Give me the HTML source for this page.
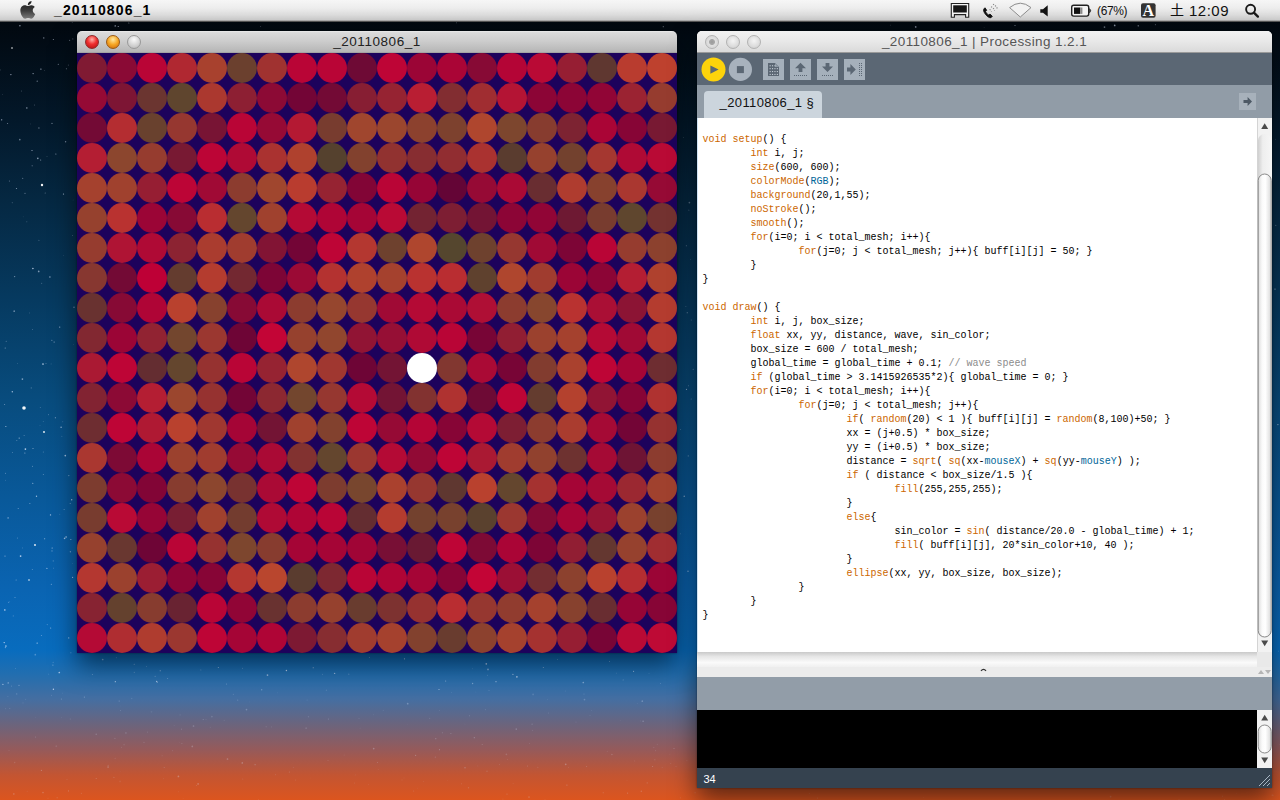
<!DOCTYPE html>
<html lang="ja">
<head>
<meta charset="utf-8">
<title>_20110806_1</title>
<style>
*{box-sizing:border-box;margin:0;padding:0}
html,body{width:1280px;height:800px;overflow:hidden}
body{position:relative;font-family:"Liberation Sans","Noto Sans CJK JP",sans-serif;color:#000;
background:linear-gradient(180deg,#010509 0px,#020b14 40px,#03182a 120px,#052842 200px,#063a60 300px,#084c7e 400px,#09599a 500px,#0a64b2 590px,#086cbe 650px,#236eaf 675px,#466ea0 700px,#6c647c 725px,#965a5a 750px,#c35532 775px,#dc551e 800px);}
#stars{position:absolute;left:0;top:0;width:1280px;height:800px}
/* menubar */
#menubar{position:absolute;left:0;top:0;width:1280px;height:22px;background:linear-gradient(180deg,#f6f6f6 0,#ededed 8px,#dcdcdc 15px,#cbcbcb 20px,#8a8a8a 21px,#222 22px);}
#menubar .apptitle{position:absolute;left:54px;top:0px;font-weight:bold;font-size:14px;line-height:20px;letter-spacing:1.15px}
#menubar .txt{position:absolute;top:1px;font-size:14px;line-height:20px;color:#111;white-space:nowrap}
#menubar svg{position:absolute}
/* sketch window */
#sketch{position:absolute;left:77px;top:31px;width:600px;height:622px;box-shadow:0 12px 26px 0px rgba(0,0,0,.55),0 0 2px rgba(0,0,0,.5);border-radius:5px 5px 0 0}
.tbar{position:absolute;left:0;top:0;width:100%;height:22px;border-radius:5px 5px 0 0;background:linear-gradient(180deg,#ebebeb 0,#dadada 8%,#cecece 45%,#b6b6b6 100%);border-bottom:1px solid #a4a4a4;text-align:center;font-size:13.5px;letter-spacing:.55px;line-height:21px;color:#222}
.tl{position:absolute;top:4px;width:14px;height:14px;border-radius:50%}
#canvas{position:absolute;left:0;top:22px;width:600px;height:600px;background:#1d025c;display:block}
/* processing window */
#pde{position:absolute;left:697px;top:31px;width:575px;height:757px;box-shadow:0 12px 26px 0px rgba(0,0,0,.55),0 0 2px rgba(0,0,0,.5);border-radius:5px 5px 0 0;background:#fff}
#pde .tbar{color:#555;font-size:13.5px;letter-spacing:.4px;background:linear-gradient(180deg,#f2f2f2 0,#e8e8e8 50%,#dadada 100%);border-bottom:1px solid #9a9a9a}
#toolbar{position:absolute;left:0;top:22px;width:575px;height:32px;background:#5b6774}
#tabs{position:absolute;left:0;top:54px;width:575px;height:33px;background:#919ca7}
#tab{position:absolute;left:7px;top:6px;width:118px;height:27px;background:#ccd5dd;border-radius:4px 4px 0 0;font-size:13px;line-height:24px;padding-left:15.500px;letter-spacing:.4px;color:#111}
#editor{overflow:hidden;position:absolute;left:0;top:87px;width:560px;height:534px;background:#fff;border-left:1px solid #cfe3f5}
#code{position:absolute;left:4.500px;top:15px;font-family:"Liberation Mono",monospace;font-size:10px;line-height:14px;color:#000}
.ln{white-space:pre;height:14px}
.k{color:#cc6600}.f{color:#cc6600}.c{color:#006699}.m{color:#8c8c8c}
#vscroll{position:absolute;left:560px;top:87px;width:15px;height:534px;background:linear-gradient(90deg,#d9d9d9 0,#f4f4f4 30%,#ffffff 60%,#e9e9e9 100%)}
#hscroll{position:absolute;left:0;top:621px;width:575px;height:15px;background:linear-gradient(180deg,#c9c9c9 0,#e6e6e6 30%,#fafafa 70%,#f0f0f0 100%)}
#divider{position:absolute;left:0;top:636px;width:575px;height:10px;background:#ececec}
#msg{position:absolute;left:0;top:646px;width:575px;height:33px;background:#929da8}
#console{position:absolute;left:0;top:679px;width:560px;height:58px;background:#000}
#cscroll{position:absolute;left:560px;top:679px;width:15px;height:58px;background:linear-gradient(90deg,#d9d9d9 0,#f4f4f4 30%,#ffffff 60%,#e9e9e9 100%)}
#status{position:absolute;left:0;top:737px;width:575px;height:20px;background:#35424f;color:#fff;font-size:11px;line-height:22px;padding-left:6.500px}
</style>
</head>
<body>
<svg id="stars" viewBox="0 0 1280 800">
<circle cx="685.9" cy="306.5" r="0.35" fill="#dfeaff" opacity="0.80"/>
<circle cx="63.5" cy="194.0" r="0.6" fill="#dfeaff" opacity="0.77"/>
<circle cx="368.6" cy="784.6" r="0.35" fill="#dfeaff" opacity="0.20"/>
<circle cx="15.4" cy="668.6" r="0.45" fill="#dfeaff" opacity="0.41"/>
<circle cx="5.2" cy="347.9" r="0.5" fill="#dfeaff" opacity="0.62"/>
<circle cx="584.5" cy="699.6" r="0.85" fill="#dfeaff" opacity="0.23"/>
<circle cx="686.9" cy="760.3" r="0.6" fill="#dfeaff" opacity="0.09"/>
<circle cx="157.2" cy="682.5" r="0.5" fill="#dfeaff" opacity="0.54"/>
<circle cx="447.4" cy="780.2" r="0.35" fill="#dfeaff" opacity="0.13"/>
<circle cx="193.5" cy="726.0" r="0.85" fill="#dfeaff" opacity="0.23"/>
<circle cx="607.2" cy="751.3" r="0.45" fill="#dfeaff" opacity="0.20"/>
<circle cx="674.0" cy="748.4" r="0.5" fill="#dfeaff" opacity="0.29"/>
<circle cx="249.4" cy="701.9" r="0.35" fill="#dfeaff" opacity="0.14"/>
<circle cx="680.7" cy="429.3" r="0.35" fill="#dfeaff" opacity="0.77"/>
<circle cx="35.7" cy="717.5" r="0.35" fill="#dfeaff" opacity="0.18"/>
<circle cx="611.9" cy="754.5" r="0.7" fill="#dfeaff" opacity="0.20"/>
<circle cx="120.5" cy="710.5" r="0.45" fill="#dfeaff" opacity="0.30"/>
<circle cx="24.9" cy="453.1" r="0.5" fill="#dfeaff" opacity="0.67"/>
<circle cx="378.2" cy="769.5" r="0.35" fill="#dfeaff" opacity="0.29"/>
<circle cx="50.7" cy="628.1" r="0.5" fill="#dfeaff" opacity="0.70"/>
<circle cx="21.5" cy="90.9" r="0.5" fill="#dfeaff" opacity="0.30"/>
<circle cx="23.2" cy="216.8" r="0.35" fill="#dfeaff" opacity="0.26"/>
<circle cx="647.2" cy="782.9" r="0.6" fill="#dfeaff" opacity="0.19"/>
<circle cx="633.6" cy="671.3" r="0.5" fill="#dfeaff" opacity="0.83"/>
<circle cx="178.8" cy="791.8" r="0.35" fill="#dfeaff" opacity="0.26"/>
<circle cx="18.2" cy="508.6" r="0.5" fill="#dfeaff" opacity="0.51"/>
<circle cx="70.9" cy="539.5" r="0.5" fill="#dfeaff" opacity="0.77"/>
<circle cx="456.4" cy="22.8" r="0.5" fill="#dfeaff" opacity="0.30"/>
<circle cx="116.3" cy="657.7" r="0.45" fill="#dfeaff" opacity="0.49"/>
<circle cx="53.3" cy="39.5" r="0.5" fill="#dfeaff" opacity="0.63"/>
<circle cx="108.1" cy="767.0" r="0.85" fill="#dfeaff" opacity="0.25"/>
<circle cx="417.5" cy="788.1" r="0.45" fill="#dfeaff" opacity="0.15"/>
<circle cx="20.6" cy="556.1" r="0.85" fill="#dfeaff" opacity="0.79"/>
<circle cx="134.3" cy="672.3" r="0.6" fill="#dfeaff" opacity="0.28"/>
<circle cx="24.1" cy="435.5" r="0.45" fill="#dfeaff" opacity="0.54"/>
<circle cx="4.2" cy="642.6" r="0.7" fill="#dfeaff" opacity="0.81"/>
<circle cx="59.8" cy="514.3" r="0.45" fill="#dfeaff" opacity="0.30"/>
<circle cx="22.4" cy="379.1" r="0.85" fill="#dfeaff" opacity="0.55"/>
<circle cx="1273.1" cy="795.3" r="0.5" fill="#dfeaff" opacity="0.13"/>
<circle cx="670.8" cy="763.2" r="0.45" fill="#dfeaff" opacity="0.21"/>
<circle cx="637.3" cy="703.6" r="0.5" fill="#dfeaff" opacity="0.09"/>
<circle cx="4.6" cy="404.5" r="0.5" fill="#dfeaff" opacity="0.49"/>
<circle cx="15.0" cy="597.6" r="0.5" fill="#dfeaff" opacity="0.47"/>
<circle cx="502.9" cy="799.1" r="0.6" fill="#dfeaff" opacity="0.10"/>
<circle cx="66.1" cy="537.0" r="0.7" fill="#dfeaff" opacity="0.81"/>
<circle cx="477.9" cy="765.9" r="0.35" fill="#dfeaff" opacity="0.26"/>
<circle cx="266.1" cy="726.8" r="0.5" fill="#dfeaff" opacity="0.20"/>
<circle cx="25.7" cy="699.3" r="0.5" fill="#dfeaff" opacity="0.17"/>
<circle cx="355.2" cy="774.9" r="0.45" fill="#dfeaff" opacity="0.23"/>
<circle cx="1.7" cy="119.8" r="0.6" fill="#dfeaff" opacity="0.80"/>
<circle cx="377.5" cy="762.6" r="0.5" fill="#dfeaff" opacity="0.22"/>
<circle cx="69.6" cy="40.4" r="0.6" fill="#dfeaff" opacity="0.34"/>
<circle cx="66.4" cy="68.8" r="0.5" fill="#dfeaff" opacity="0.52"/>
<circle cx="693.2" cy="369.3" r="0.5" fill="#dfeaff" opacity="0.47"/>
<circle cx="44.6" cy="70.7" r="0.35" fill="#dfeaff" opacity="0.40"/>
<circle cx="4.8" cy="609.9" r="0.85" fill="#dfeaff" opacity="0.63"/>
<circle cx="43.3" cy="451.9" r="0.5" fill="#dfeaff" opacity="0.35"/>
<circle cx="590.0" cy="715.4" r="0.45" fill="#dfeaff" opacity="0.24"/>
<circle cx="155.1" cy="676.2" r="0.5" fill="#dfeaff" opacity="0.42"/>
<circle cx="360.1" cy="728.1" r="0.45" fill="#dfeaff" opacity="0.16"/>
<circle cx="507.0" cy="794.1" r="0.6" fill="#dfeaff" opacity="0.20"/>
<circle cx="5.7" cy="708.8" r="0.45" fill="#dfeaff" opacity="0.26"/>
<circle cx="242.7" cy="779.0" r="0.6" fill="#dfeaff" opacity="0.13"/>
<circle cx="8.1" cy="517.9" r="0.7" fill="#dfeaff" opacity="0.62"/>
<circle cx="14.6" cy="276.6" r="0.7" fill="#dfeaff" opacity="0.47"/>
<circle cx="40.3" cy="407.6" r="0.5" fill="#dfeaff" opacity="0.29"/>
<circle cx="533.1" cy="694.4" r="0.85" fill="#dfeaff" opacity="0.16"/>
<circle cx="260.7" cy="26.6" r="0.45" fill="#dfeaff" opacity="0.50"/>
<circle cx="162.1" cy="755.7" r="0.5" fill="#dfeaff" opacity="0.15"/>
<circle cx="246.5" cy="709.6" r="0.85" fill="#dfeaff" opacity="0.25"/>
<circle cx="48.8" cy="674.1" r="0.35" fill="#dfeaff" opacity="0.48"/>
<circle cx="583.3" cy="682.5" r="0.85" fill="#dfeaff" opacity="0.43"/>
<circle cx="29.9" cy="503.5" r="0.5" fill="#dfeaff" opacity="0.53"/>
<circle cx="52.0" cy="123.4" r="0.7" fill="#dfeaff" opacity="0.44"/>
<circle cx="33.1" cy="73.6" r="0.6" fill="#dfeaff" opacity="0.69"/>
<circle cx="203.2" cy="719.5" r="0.5" fill="#dfeaff" opacity="0.28"/>
<circle cx="58.3" cy="64.3" r="0.6" fill="#dfeaff" opacity="0.46"/>
<circle cx="172.5" cy="750.7" r="0.45" fill="#dfeaff" opacity="0.24"/>
<circle cx="0.5" cy="69.9" r="0.35" fill="#dfeaff" opacity="0.49"/>
<circle cx="915.7" cy="26.9" r="0.85" fill="#dfeaff" opacity="0.51"/>
<circle cx="1275.7" cy="225.4" r="0.7" fill="#dfeaff" opacity="0.27"/>
<circle cx="306.1" cy="728.1" r="0.7" fill="#dfeaff" opacity="0.28"/>
<circle cx="686.5" cy="389.3" r="0.6" fill="#dfeaff" opacity="0.67"/>
<circle cx="34.4" cy="105.0" r="0.45" fill="#dfeaff" opacity="0.46"/>
<circle cx="53.3" cy="560.9" r="0.7" fill="#dfeaff" opacity="0.28"/>
<circle cx="255.1" cy="764.7" r="0.6" fill="#dfeaff" opacity="0.27"/>
<circle cx="84.4" cy="697.1" r="0.7" fill="#dfeaff" opacity="0.29"/>
<circle cx="26.8" cy="221.7" r="0.5" fill="#dfeaff" opacity="0.28"/>
<circle cx="40.0" cy="425.5" r="0.35" fill="#dfeaff" opacity="0.46"/>
<circle cx="277.2" cy="692.8" r="0.35" fill="#dfeaff" opacity="0.21"/>
<circle cx="627.6" cy="793.1" r="0.6" fill="#dfeaff" opacity="0.25"/>
<circle cx="485.5" cy="709.7" r="0.45" fill="#dfeaff" opacity="0.29"/>
<circle cx="43.4" cy="474.5" r="0.6" fill="#dfeaff" opacity="0.34"/>
<circle cx="591.4" cy="710.6" r="0.45" fill="#dfeaff" opacity="0.19"/>
<circle cx="1222.4" cy="796.1" r="0.45" fill="#dfeaff" opacity="0.29"/>
<circle cx="627.0" cy="780.3" r="0.35" fill="#dfeaff" opacity="0.14"/>
<circle cx="445.7" cy="681.1" r="0.5" fill="#dfeaff" opacity="0.57"/>
<circle cx="72.5" cy="235.4" r="0.5" fill="#dfeaff" opacity="0.29"/>
<circle cx="96.2" cy="734.2" r="0.7" fill="#dfeaff" opacity="0.23"/>
<circle cx="289.3" cy="771.9" r="0.5" fill="#dfeaff" opacity="0.23"/>
<circle cx="529.0" cy="797.0" r="0.85" fill="#dfeaff" opacity="0.20"/>
<circle cx="160.2" cy="670.7" r="0.5" fill="#dfeaff" opacity="0.72"/>
<circle cx="415.6" cy="755.4" r="0.6" fill="#dfeaff" opacity="0.26"/>
<circle cx="14.7" cy="762.5" r="0.7" fill="#dfeaff" opacity="0.15"/>
<circle cx="684.2" cy="496.2" r="0.7" fill="#dfeaff" opacity="0.62"/>
<circle cx="1104.5" cy="27.1" r="0.85" fill="#dfeaff" opacity="0.44"/>
<circle cx="545.0" cy="800.0" r="0.7" fill="#dfeaff" opacity="0.10"/>
<circle cx="36.5" cy="496.3" r="0.7" fill="#dfeaff" opacity="0.69"/>
<circle cx="1278.7" cy="651.1" r="0.35" fill="#dfeaff" opacity="0.56"/>
<circle cx="620.4" cy="720.3" r="0.35" fill="#dfeaff" opacity="0.13"/>
<circle cx="163.3" cy="778.8" r="0.35" fill="#dfeaff" opacity="0.25"/>
<circle cx="51.3" cy="584.2" r="0.5" fill="#dfeaff" opacity="0.58"/>
<circle cx="63.6" cy="255.7" r="0.35" fill="#dfeaff" opacity="0.28"/>
<circle cx="50.5" cy="514.9" r="0.7" fill="#dfeaff" opacity="0.71"/>
<circle cx="47.3" cy="624.6" r="0.7" fill="#dfeaff" opacity="0.26"/>
<circle cx="43.8" cy="37.9" r="0.6" fill="#dfeaff" opacity="0.64"/>
<circle cx="19.9" cy="25.7" r="0.7" fill="#dfeaff" opacity="0.65"/>
<circle cx="40.9" cy="69.1" r="0.7" fill="#dfeaff" opacity="0.66"/>
<circle cx="19.8" cy="139.6" r="0.85" fill="#dfeaff" opacity="0.44"/>
<circle cx="548.6" cy="713.0" r="0.5" fill="#dfeaff" opacity="0.17"/>
<circle cx="180.1" cy="714.9" r="0.6" fill="#dfeaff" opacity="0.12"/>
<circle cx="691.2" cy="399.1" r="0.5" fill="#dfeaff" opacity="0.37"/>
<circle cx="57.1" cy="797.8" r="0.5" fill="#dfeaff" opacity="0.27"/>
<circle cx="38.9" cy="240.3" r="0.6" fill="#dfeaff" opacity="0.26"/>
<circle cx="43.0" cy="792.5" r="0.85" fill="#dfeaff" opacity="0.21"/>
<circle cx="167.6" cy="678.4" r="0.5" fill="#dfeaff" opacity="0.37"/>
<circle cx="65.3" cy="455.6" r="0.85" fill="#dfeaff" opacity="0.67"/>
<circle cx="623.1" cy="679.9" r="0.35" fill="#dfeaff" opacity="0.77"/>
<circle cx="114.9" cy="738.4" r="0.6" fill="#dfeaff" opacity="0.17"/>
<circle cx="1236.2" cy="793.6" r="0.45" fill="#dfeaff" opacity="0.12"/>
<circle cx="35.6" cy="737.1" r="0.5" fill="#dfeaff" opacity="0.25"/>
<circle cx="16.1" cy="580.0" r="0.45" fill="#dfeaff" opacity="0.73"/>
<circle cx="200.9" cy="669.9" r="0.35" fill="#dfeaff" opacity="0.81"/>
<circle cx="124.1" cy="744.6" r="0.85" fill="#dfeaff" opacity="0.09"/>
<circle cx="96.2" cy="778.5" r="0.5" fill="#dfeaff" opacity="0.26"/>
<circle cx="72.6" cy="577.3" r="0.6" fill="#dfeaff" opacity="0.78"/>
<circle cx="32.5" cy="466.2" r="0.5" fill="#dfeaff" opacity="0.45"/>
<circle cx="407.1" cy="724.7" r="0.35" fill="#dfeaff" opacity="0.12"/>
<circle cx="51.9" cy="340.2" r="0.5" fill="#dfeaff" opacity="0.59"/>
<circle cx="70.9" cy="652.7" r="0.5" fill="#dfeaff" opacity="0.42"/>
<circle cx="46.9" cy="568.4" r="0.6" fill="#dfeaff" opacity="0.61"/>
<circle cx="5.9" cy="426.4" r="0.5" fill="#dfeaff" opacity="0.83"/>
<circle cx="313.2" cy="667.8" r="0.5" fill="#dfeaff" opacity="0.72"/>
<circle cx="334.6" cy="673.4" r="0.7" fill="#dfeaff" opacity="0.60"/>
<circle cx="131.7" cy="698.5" r="0.7" fill="#dfeaff" opacity="0.13"/>
<circle cx="507.7" cy="759.7" r="0.35" fill="#dfeaff" opacity="0.28"/>
<circle cx="506.4" cy="754.3" r="0.85" fill="#dfeaff" opacity="0.16"/>
<circle cx="512.9" cy="674.4" r="0.7" fill="#dfeaff" opacity="0.51"/>
<circle cx="662.2" cy="767.2" r="0.5" fill="#dfeaff" opacity="0.14"/>
<circle cx="178.4" cy="776.4" r="0.85" fill="#dfeaff" opacity="0.30"/>
<circle cx="51.5" cy="695.4" r="0.6" fill="#dfeaff" opacity="0.14"/>
<circle cx="683.3" cy="137.5" r="0.35" fill="#dfeaff" opacity="0.56"/>
<circle cx="469.5" cy="715.8" r="0.5" fill="#dfeaff" opacity="0.22"/>
<circle cx="451.4" cy="692.5" r="0.45" fill="#dfeaff" opacity="0.16"/>
<circle cx="72.8" cy="38.9" r="0.6" fill="#dfeaff" opacity="0.29"/>
<circle cx="1114.7" cy="25.4" r="0.85" fill="#dfeaff" opacity="0.58"/>
<circle cx="8.7" cy="602.2" r="0.5" fill="#dfeaff" opacity="0.48"/>
<circle cx="328.4" cy="719.0" r="0.5" fill="#dfeaff" opacity="0.28"/>
<circle cx="1277.9" cy="424.6" r="0.6" fill="#dfeaff" opacity="0.69"/>
<circle cx="52.1" cy="548.1" r="0.5" fill="#dfeaff" opacity="0.82"/>
<circle cx="1275.0" cy="289.1" r="0.6" fill="#dfeaff" opacity="0.70"/>
<circle cx="439.5" cy="749.7" r="0.6" fill="#dfeaff" opacity="0.27"/>
<circle cx="54.2" cy="342.1" r="0.85" fill="#dfeaff" opacity="0.25"/>
<circle cx="37.8" cy="158.3" r="0.85" fill="#dfeaff" opacity="0.58"/>
<circle cx="680.3" cy="797.8" r="0.6" fill="#dfeaff" opacity="0.13"/>
<circle cx="37.2" cy="81.2" r="0.6" fill="#dfeaff" opacity="0.54"/>
<circle cx="25.0" cy="193.2" r="0.5" fill="#dfeaff" opacity="0.60"/>
<circle cx="56.3" cy="746.2" r="0.85" fill="#dfeaff" opacity="0.12"/>
<circle cx="7.9" cy="696.5" r="0.5" fill="#dfeaff" opacity="0.15"/>
<circle cx="634.3" cy="760.9" r="0.45" fill="#dfeaff" opacity="0.23"/>
<circle cx="9.8" cy="708.4" r="0.5" fill="#dfeaff" opacity="0.21"/>
<circle cx="44.7" cy="538.8" r="0.5" fill="#dfeaff" opacity="0.73"/>
<circle cx="261.7" cy="689.8" r="0.7" fill="#dfeaff" opacity="0.33"/>
<circle cx="226.6" cy="684.1" r="0.5" fill="#dfeaff" opacity="0.36"/>
<circle cx="369.4" cy="657.5" r="0.5" fill="#dfeaff" opacity="0.42"/>
<circle cx="516.3" cy="729.1" r="0.85" fill="#dfeaff" opacity="0.22"/>
<circle cx="32.3" cy="569.5" r="0.5" fill="#dfeaff" opacity="0.40"/>
<circle cx="147.5" cy="732.1" r="0.7" fill="#dfeaff" opacity="0.13"/>
<circle cx="442.4" cy="732.8" r="0.5" fill="#dfeaff" opacity="0.23"/>
<circle cx="115.1" cy="758.3" r="0.5" fill="#dfeaff" opacity="0.18"/>
<circle cx="242.3" cy="762.9" r="0.85" fill="#dfeaff" opacity="0.26"/>
<circle cx="383.2" cy="710.3" r="0.45" fill="#dfeaff" opacity="0.21"/>
<circle cx="198.1" cy="783.9" r="0.85" fill="#dfeaff" opacity="0.25"/>
<circle cx="13.8" cy="793.9" r="0.85" fill="#dfeaff" opacity="0.19"/>
<circle cx="32.4" cy="329.5" r="0.45" fill="#dfeaff" opacity="0.43"/>
<circle cx="472.7" cy="668.8" r="0.45" fill="#dfeaff" opacity="0.28"/>
<circle cx="1179.0" cy="799.9" r="0.5" fill="#dfeaff" opacity="0.28"/>
<circle cx="51.1" cy="363.9" r="0.45" fill="#dfeaff" opacity="0.38"/>
<circle cx="5.4" cy="647.6" r="0.7" fill="#dfeaff" opacity="0.46"/>
<circle cx="439.6" cy="710.6" r="0.35" fill="#dfeaff" opacity="0.27"/>
<circle cx="53.4" cy="568.1" r="0.45" fill="#dfeaff" opacity="0.53"/>
<circle cx="27.2" cy="791.2" r="0.5" fill="#dfeaff" opacity="0.11"/>
<circle cx="26.8" cy="107.9" r="0.85" fill="#dfeaff" opacity="0.41"/>
<circle cx="192.3" cy="746.4" r="0.85" fill="#dfeaff" opacity="0.23"/>
<circle cx="642.3" cy="701.2" r="0.85" fill="#dfeaff" opacity="0.26"/>
<circle cx="293.4" cy="767.3" r="0.6" fill="#dfeaff" opacity="0.10"/>
<circle cx="55.9" cy="154.0" r="0.5" fill="#dfeaff" opacity="0.69"/>
<circle cx="81.3" cy="793.3" r="0.5" fill="#dfeaff" opacity="0.21"/>
<circle cx="676.0" cy="766.5" r="0.7" fill="#dfeaff" opacity="0.09"/>
<circle cx="413.7" cy="791.0" r="0.5" fill="#dfeaff" opacity="0.19"/>
<circle cx="1275.7" cy="139.3" r="0.45" fill="#dfeaff" opacity="0.25"/>
<circle cx="435.8" cy="738.7" r="0.6" fill="#dfeaff" opacity="0.28"/>
<circle cx="224.3" cy="720.4" r="0.6" fill="#dfeaff" opacity="0.09"/>
<circle cx="73.5" cy="344.3" r="0.35" fill="#dfeaff" opacity="0.30"/>
<circle cx="32.9" cy="268.5" r="0.7" fill="#dfeaff" opacity="0.84"/>
<circle cx="71.7" cy="499.7" r="0.7" fill="#dfeaff" opacity="0.75"/>
<circle cx="196.4" cy="785.5" r="0.6" fill="#dfeaff" opacity="0.16"/>
<circle cx="669.9" cy="754.1" r="0.45" fill="#dfeaff" opacity="0.14"/>
<circle cx="513.1" cy="783.7" r="0.35" fill="#dfeaff" opacity="0.22"/>
<circle cx="565.2" cy="691.0" r="0.45" fill="#dfeaff" opacity="0.22"/>
<circle cx="233.3" cy="694.2" r="0.5" fill="#dfeaff" opacity="0.23"/>
<circle cx="429.7" cy="718.3" r="0.6" fill="#dfeaff" opacity="0.14"/>
<circle cx="48.5" cy="414.7" r="0.45" fill="#dfeaff" opacity="0.59"/>
<circle cx="61.8" cy="717.5" r="0.35" fill="#dfeaff" opacity="0.27"/>
<circle cx="275.4" cy="774.7" r="0.45" fill="#dfeaff" opacity="0.24"/>
<circle cx="55.3" cy="417.8" r="0.5" fill="#dfeaff" opacity="0.72"/>
<circle cx="691.2" cy="320.0" r="0.45" fill="#dfeaff" opacity="0.48"/>
<circle cx="183.1" cy="798.7" r="0.35" fill="#dfeaff" opacity="0.14"/>
<circle cx="641.3" cy="791.2" r="0.7" fill="#dfeaff" opacity="0.22"/>
<circle cx="404.0" cy="777.9" r="0.35" fill="#dfeaff" opacity="0.19"/>
<circle cx="486.3" cy="663.8" r="0.85" fill="#dfeaff" opacity="0.70"/>
<circle cx="181.9" cy="743.5" r="0.6" fill="#dfeaff" opacity="0.16"/>
<circle cx="227.5" cy="759.0" r="0.85" fill="#dfeaff" opacity="0.28"/>
<circle cx="488.0" cy="669.4" r="0.85" fill="#dfeaff" opacity="0.51"/>
<circle cx="7.6" cy="123.5" r="0.5" fill="#dfeaff" opacity="0.56"/>
<circle cx="22.7" cy="178.3" r="0.6" fill="#dfeaff" opacity="0.41"/>
<circle cx="164.2" cy="767.6" r="0.5" fill="#dfeaff" opacity="0.22"/>
<circle cx="32.8" cy="483.2" r="0.5" fill="#dfeaff" opacity="0.81"/>
<circle cx="12.2" cy="202.8" r="0.45" fill="#dfeaff" opacity="0.49"/>
<circle cx="52.0" cy="550.9" r="0.6" fill="#dfeaff" opacity="0.45"/>
<circle cx="115.3" cy="681.7" r="0.6" fill="#dfeaff" opacity="0.74"/>
<circle cx="70.4" cy="551.8" r="0.7" fill="#dfeaff" opacity="0.45"/>
<circle cx="64.1" cy="509.4" r="0.5" fill="#dfeaff" opacity="0.45"/>
<circle cx="663.3" cy="26.7" r="0.6" fill="#dfeaff" opacity="0.41"/>
<circle cx="326.4" cy="690.2" r="0.6" fill="#dfeaff" opacity="0.17"/>
<circle cx="690.7" cy="259.3" r="0.45" fill="#dfeaff" opacity="0.28"/>
<circle cx="687.2" cy="312.8" r="0.5" fill="#dfeaff" opacity="0.64"/>
<circle cx="10.9" cy="74.6" r="0.6" fill="#dfeaff" opacity="0.74"/>
<circle cx="45.2" cy="192.9" r="0.5" fill="#dfeaff" opacity="0.42"/>
<circle cx="62.7" cy="693.1" r="0.35" fill="#dfeaff" opacity="0.26"/>
<circle cx="286.4" cy="670.5" r="0.7" fill="#dfeaff" opacity="0.79"/>
<circle cx="72.5" cy="563.3" r="0.35" fill="#dfeaff" opacity="0.35"/>
<circle cx="295.4" cy="779.9" r="0.5" fill="#dfeaff" opacity="0.17"/>
<circle cx="146.4" cy="666.6" r="0.35" fill="#dfeaff" opacity="0.64"/>
<circle cx="128.9" cy="23.0" r="0.45" fill="#dfeaff" opacity="0.82"/>
<circle cx="43.2" cy="421.4" r="0.35" fill="#dfeaff" opacity="0.50"/>
<circle cx="115.2" cy="25.9" r="0.7" fill="#dfeaff" opacity="0.77"/>
<circle cx="120.3" cy="705.9" r="0.35" fill="#dfeaff" opacity="0.12"/>
<circle cx="328.0" cy="760.6" r="0.5" fill="#dfeaff" opacity="0.17"/>
<circle cx="307.1" cy="700.0" r="0.6" fill="#dfeaff" opacity="0.14"/>
<circle cx="68.7" cy="637.9" r="0.7" fill="#dfeaff" opacity="0.59"/>
<circle cx="373.7" cy="714.8" r="0.35" fill="#dfeaff" opacity="0.23"/>
<circle cx="41.3" cy="635.5" r="0.45" fill="#dfeaff" opacity="0.69"/>
<circle cx="423.8" cy="781.3" r="0.35" fill="#dfeaff" opacity="0.25"/>
<circle cx="322.6" cy="674.3" r="0.45" fill="#dfeaff" opacity="0.39"/>
<circle cx="64.3" cy="538.3" r="0.5" fill="#dfeaff" opacity="0.73"/>
<circle cx="1015.0" cy="25.5" r="0.5" fill="#dfeaff" opacity="0.61"/>
<circle cx="41.7" cy="283.3" r="0.5" fill="#dfeaff" opacity="0.36"/>
<circle cx="688.9" cy="210.1" r="0.45" fill="#dfeaff" opacity="0.66"/>
<circle cx="53.1" cy="662.2" r="0.45" fill="#dfeaff" opacity="0.48"/>
<circle cx="407.7" cy="703.7" r="0.85" fill="#dfeaff" opacity="0.30"/>
<circle cx="242.5" cy="668.2" r="0.45" fill="#dfeaff" opacity="0.48"/>
<circle cx="11.6" cy="686.0" r="0.35" fill="#dfeaff" opacity="0.82"/>
<circle cx="482.2" cy="744.5" r="0.5" fill="#dfeaff" opacity="0.23"/>
<circle cx="568.4" cy="767.2" r="0.5" fill="#dfeaff" opacity="0.15"/>
<circle cx="23.0" cy="702.9" r="0.7" fill="#dfeaff" opacity="0.11"/>
<circle cx="9.0" cy="750.6" r="0.5" fill="#dfeaff" opacity="0.12"/>
<circle cx="59.7" cy="327.1" r="0.7" fill="#dfeaff" opacity="0.60"/>
<circle cx="33.0" cy="448.5" r="0.5" fill="#dfeaff" opacity="0.64"/>
<circle cx="487.0" cy="771.2" r="0.7" fill="#dfeaff" opacity="0.16"/>
<circle cx="61.9" cy="436.2" r="0.45" fill="#dfeaff" opacity="0.37"/>
<circle cx="144.0" cy="742.3" r="0.6" fill="#dfeaff" opacity="0.18"/>
<circle cx="52.9" cy="665.1" r="0.6" fill="#dfeaff" opacity="0.43"/>
<circle cx="516.9" cy="676.8" r="0.85" fill="#dfeaff" opacity="0.70"/>
<circle cx="237.7" cy="700.1" r="0.6" fill="#dfeaff" opacity="0.24"/>
<circle cx="529.5" cy="743.4" r="0.5" fill="#dfeaff" opacity="0.12"/>
<circle cx="640.7" cy="720.9" r="0.35" fill="#dfeaff" opacity="0.24"/>
<circle cx="92.4" cy="674.4" r="0.5" fill="#dfeaff" opacity="0.38"/>
<circle cx="688.5" cy="385.8" r="0.5" fill="#dfeaff" opacity="0.38"/>
<circle cx="267.5" cy="675.1" r="0.85" fill="#dfeaff" opacity="0.60"/>
<circle cx="499.6" cy="764.6" r="0.5" fill="#dfeaff" opacity="0.14"/>
<circle cx="1110.6" cy="796.6" r="0.85" fill="#dfeaff" opacity="0.17"/>
<circle cx="680.4" cy="533.8" r="0.5" fill="#dfeaff" opacity="0.29"/>
<circle cx="16.7" cy="693.9" r="0.7" fill="#dfeaff" opacity="0.24"/>
<circle cx="688.3" cy="455.9" r="0.7" fill="#dfeaff" opacity="0.35"/>
<circle cx="809.3" cy="793.4" r="0.5" fill="#dfeaff" opacity="0.11"/>
<circle cx="439.0" cy="689.6" r="0.5" fill="#dfeaff" opacity="0.72"/>
<circle cx="603.2" cy="792.7" r="0.5" fill="#dfeaff" opacity="0.25"/>
<circle cx="609.6" cy="661.4" r="0.45" fill="#dfeaff" opacity="0.76"/>
<circle cx="206.0" cy="719.4" r="0.5" fill="#dfeaff" opacity="0.12"/>
<circle cx="16.5" cy="188.5" r="0.6" fill="#dfeaff" opacity="0.57"/>
<circle cx="35.3" cy="654.7" r="0.85" fill="#dfeaff" opacity="0.30"/>
<circle cx="9.4" cy="181.1" r="0.5" fill="#dfeaff" opacity="0.48"/>
<circle cx="181.5" cy="729.2" r="0.6" fill="#dfeaff" opacity="0.17"/>
<circle cx="1138.2" cy="25.8" r="0.6" fill="#dfeaff" opacity="0.72"/>
<circle cx="120.1" cy="781.4" r="0.85" fill="#dfeaff" opacity="0.09"/>
<circle cx="652.6" cy="766.4" r="0.5" fill="#dfeaff" opacity="0.28"/>
<circle cx="2.9" cy="684.4" r="0.6" fill="#dfeaff" opacity="0.64"/>
<circle cx="688.0" cy="571.2" r="0.7" fill="#dfeaff" opacity="0.58"/>
<circle cx="9.8" cy="601.6" r="0.35" fill="#dfeaff" opacity="0.36"/>
<circle cx="649.0" cy="673.4" r="0.45" fill="#dfeaff" opacity="0.32"/>
<circle cx="984.1" cy="27.4" r="0.35" fill="#dfeaff" opacity="0.28"/>
<circle cx="70.2" cy="503.4" r="0.5" fill="#dfeaff" opacity="0.52"/>
<circle cx="566.9" cy="785.1" r="0.7" fill="#dfeaff" opacity="0.23"/>
<circle cx="16.8" cy="440.4" r="0.5" fill="#dfeaff" opacity="0.39"/>
<circle cx="134.2" cy="664.2" r="0.5" fill="#dfeaff" opacity="0.51"/>
<circle cx="576.0" cy="722.1" r="0.5" fill="#dfeaff" opacity="0.15"/>
<circle cx="121.4" cy="747.3" r="0.5" fill="#dfeaff" opacity="0.16"/>
<circle cx="616.2" cy="673.1" r="0.35" fill="#dfeaff" opacity="0.48"/>
<circle cx="19.0" cy="685.3" r="0.45" fill="#dfeaff" opacity="0.81"/>
<circle cx="308.3" cy="716.7" r="0.5" fill="#dfeaff" opacity="0.27"/>
<circle cx="64.7" cy="538.3" r="0.85" fill="#dfeaff" opacity="0.47"/>
<circle cx="1279.9" cy="744.3" r="0.5" fill="#dfeaff" opacity="0.11"/>
<circle cx="31.3" cy="387.9" r="0.7" fill="#dfeaff" opacity="0.27"/>
<circle cx="53.4" cy="689.2" r="0.7" fill="#dfeaff" opacity="0.79"/>
<circle cx="46.0" cy="363.6" r="0.45" fill="#dfeaff" opacity="0.75"/>
<circle cx="32.0" cy="150.5" r="0.5" fill="#dfeaff" opacity="0.82"/>
<circle cx="654.9" cy="759.8" r="0.5" fill="#dfeaff" opacity="0.23"/>
<circle cx="271.7" cy="726.9" r="0.45" fill="#dfeaff" opacity="0.26"/>
<circle cx="258.4" cy="799.7" r="0.5" fill="#dfeaff" opacity="0.14"/>
<circle cx="40.7" cy="160.1" r="0.5" fill="#dfeaff" opacity="0.65"/>
<circle cx="29.4" cy="312.9" r="0.45" fill="#dfeaff" opacity="0.39"/>
<circle cx="532.5" cy="730.3" r="0.6" fill="#dfeaff" opacity="0.12"/>
<circle cx="102.7" cy="659.5" r="0.85" fill="#dfeaff" opacity="0.50"/>
<circle cx="344.2" cy="754.9" r="0.5" fill="#dfeaff" opacity="0.11"/>
<circle cx="557.5" cy="659.6" r="0.35" fill="#dfeaff" opacity="0.79"/>
<circle cx="489.0" cy="690.6" r="0.5" fill="#dfeaff" opacity="0.22"/>
<circle cx="527.4" cy="766.0" r="0.5" fill="#dfeaff" opacity="0.23"/>
<circle cx="12.3" cy="391.8" r="0.7" fill="#dfeaff" opacity="0.71"/>
<circle cx="113.9" cy="777.4" r="0.6" fill="#dfeaff" opacity="0.17"/>
<circle cx="22.5" cy="547.9" r="0.45" fill="#dfeaff" opacity="0.49"/>
<circle cx="472.6" cy="683.5" r="0.7" fill="#dfeaff" opacity="0.40"/>
<circle cx="19.2" cy="438.1" r="0.7" fill="#dfeaff" opacity="0.59"/>
<circle cx="37.2" cy="643.2" r="0.85" fill="#dfeaff" opacity="0.35"/>
<circle cx="890.7" cy="25.1" r="0.45" fill="#dfeaff" opacity="0.35"/>
<circle cx="67.0" cy="779.4" r="0.45" fill="#dfeaff" opacity="0.25"/>
<circle cx="65.6" cy="141.8" r="0.7" fill="#dfeaff" opacity="0.50"/>
<circle cx="73.1" cy="200.0" r="0.35" fill="#dfeaff" opacity="0.38"/>
<circle cx="62.8" cy="421.7" r="0.45" fill="#dfeaff" opacity="0.36"/>
<circle cx="38.7" cy="271.4" r="0.85" fill="#dfeaff" opacity="0.55"/>
<circle cx="120.4" cy="771.6" r="0.35" fill="#dfeaff" opacity="0.09"/>
<circle cx="404.5" cy="658.8" r="0.6" fill="#dfeaff" opacity="0.75"/>
<circle cx="310.8" cy="778.0" r="0.35" fill="#dfeaff" opacity="0.11"/>
<circle cx="72.2" cy="22.1" r="0.45" fill="#dfeaff" opacity="0.59"/>
<circle cx="13.3" cy="615.9" r="0.6" fill="#dfeaff" opacity="0.27"/>
<circle cx="48.0" cy="798.1" r="0.45" fill="#dfeaff" opacity="0.27"/>
<circle cx="487.3" cy="675.3" r="0.45" fill="#dfeaff" opacity="0.39"/>
<circle cx="70.2" cy="719.0" r="0.45" fill="#dfeaff" opacity="0.27"/>
<circle cx="61.4" cy="699.0" r="0.6" fill="#dfeaff" opacity="0.29"/>
<circle cx="151.5" cy="711.8" r="0.85" fill="#dfeaff" opacity="0.09"/>
<circle cx="450.9" cy="733.5" r="0.6" fill="#dfeaff" opacity="0.21"/>
<circle cx="465.0" cy="767.8" r="0.7" fill="#dfeaff" opacity="0.27"/>
<circle cx="30.3" cy="123.9" r="0.35" fill="#dfeaff" opacity="0.36"/>
<circle cx="74.0" cy="307.3" r="0.7" fill="#dfeaff" opacity="0.51"/>
<circle cx="1224.5" cy="800.0" r="0.6" fill="#dfeaff" opacity="0.28"/>
<circle cx="68.4" cy="65.1" r="0.6" fill="#dfeaff" opacity="0.26"/>
<circle cx="643.1" cy="721.2" r="0.7" fill="#dfeaff" opacity="0.29"/>
<circle cx="653.8" cy="747.6" r="0.6" fill="#dfeaff" opacity="0.13"/>
<circle cx="38.9" cy="128.0" r="0.7" fill="#dfeaff" opacity="0.41"/>
<circle cx="118.2" cy="26.4" r="0.5" fill="#dfeaff" opacity="0.79"/>
<circle cx="689.4" cy="202.6" r="0.85" fill="#dfeaff" opacity="0.36"/>
<circle cx="348.8" cy="674.2" r="0.6" fill="#dfeaff" opacity="0.28"/>
<circle cx="817.5" cy="798.1" r="0.5" fill="#dfeaff" opacity="0.17"/>
<circle cx="923.7" cy="797.3" r="0.45" fill="#dfeaff" opacity="0.12"/>
<circle cx="8.2" cy="682.9" r="0.7" fill="#dfeaff" opacity="0.54"/>
<circle cx="5.0" cy="556.1" r="0.7" fill="#dfeaff" opacity="0.47"/>
<circle cx="435.3" cy="757.1" r="0.6" fill="#dfeaff" opacity="0.20"/>
<circle cx="174.1" cy="725.6" r="0.35" fill="#dfeaff" opacity="0.22"/>
<circle cx="25.4" cy="449.1" r="0.85" fill="#dfeaff" opacity="0.81"/>
<circle cx="119.3" cy="701.1" r="0.85" fill="#dfeaff" opacity="0.13"/>
<circle cx="49.9" cy="277.0" r="0.7" fill="#dfeaff" opacity="0.63"/>
<circle cx="461.6" cy="783.7" r="0.5" fill="#dfeaff" opacity="0.16"/>
<circle cx="211.9" cy="716.6" r="0.85" fill="#dfeaff" opacity="0.16"/>
<circle cx="43.0" cy="364.0" r="0.85" fill="#dfeaff" opacity="0.78"/>
<circle cx="17.7" cy="363.5" r="0.35" fill="#dfeaff" opacity="0.61"/>
<circle cx="5.9" cy="646.0" r="0.85" fill="#dfeaff" opacity="0.67"/>
<circle cx="5.5" cy="473.2" r="0.5" fill="#dfeaff" opacity="0.44"/>
<circle cx="352.1" cy="740.0" r="0.35" fill="#dfeaff" opacity="0.19"/>
<circle cx="5.6" cy="480.2" r="0.45" fill="#dfeaff" opacity="0.31"/>
<circle cx="474.3" cy="737.7" r="0.6" fill="#dfeaff" opacity="0.30"/>
<circle cx="584.0" cy="693.9" r="0.5" fill="#dfeaff" opacity="0.23"/>
<circle cx="59.3" cy="672.5" r="0.85" fill="#dfeaff" opacity="0.66"/>
<circle cx="68.5" cy="790.9" r="0.6" fill="#dfeaff" opacity="0.24"/>
<circle cx="210.2" cy="727.2" r="0.45" fill="#dfeaff" opacity="0.19"/>
<circle cx="125.9" cy="732.9" r="0.85" fill="#dfeaff" opacity="0.15"/>
<circle cx="586.6" cy="766.4" r="0.5" fill="#dfeaff" opacity="0.22"/>
<circle cx="12.6" cy="452.4" r="0.45" fill="#dfeaff" opacity="0.56"/>
<circle cx="359.0" cy="718.5" r="0.7" fill="#dfeaff" opacity="0.09"/>
<circle cx="532.1" cy="724.2" r="0.6" fill="#dfeaff" opacity="0.20"/>
<circle cx="543.3" cy="667.4" r="0.5" fill="#dfeaff" opacity="0.56"/>
<circle cx="547.6" cy="699.5" r="0.35" fill="#dfeaff" opacity="0.29"/>
<circle cx="1272.2" cy="795.0" r="0.6" fill="#dfeaff" opacity="0.20"/>
<circle cx="179.8" cy="742.2" r="0.35" fill="#dfeaff" opacity="0.14"/>
<circle cx="655.6" cy="750.7" r="0.45" fill="#dfeaff" opacity="0.23"/>
<circle cx="657.3" cy="744.3" r="0.6" fill="#dfeaff" opacity="0.10"/>
<circle cx="156.7" cy="681.4" r="0.7" fill="#dfeaff" opacity="0.70"/>
<circle cx="61.1" cy="427.3" r="0.7" fill="#dfeaff" opacity="0.68"/>
<circle cx="1155.3" cy="24.8" r="0.45" fill="#dfeaff" opacity="0.65"/>
<circle cx="686.3" cy="245.8" r="0.5" fill="#dfeaff" opacity="0.45"/>
<circle cx="695.1" cy="792.7" r="0.7" fill="#dfeaff" opacity="0.11"/>
<circle cx="373.7" cy="748.6" r="0.85" fill="#dfeaff" opacity="0.27"/>
<circle cx="32.2" cy="165.8" r="0.7" fill="#dfeaff" opacity="0.28"/>
<circle cx="68.8" cy="475.6" r="0.7" fill="#dfeaff" opacity="0.41"/>
<circle cx="218.3" cy="667.6" r="0.5" fill="#dfeaff" opacity="0.68"/>
<circle cx="354.5" cy="783.0" r="0.5" fill="#dfeaff" opacity="0.13"/>
<circle cx="565.7" cy="764.3" r="0.85" fill="#dfeaff" opacity="0.29"/>
<circle cx="41.4" cy="770.4" r="0.6" fill="#dfeaff" opacity="0.27"/>
<circle cx="537.8" cy="767.2" r="0.5" fill="#dfeaff" opacity="0.18"/>
<circle cx="402.0" cy="779.9" r="0.45" fill="#dfeaff" opacity="0.24"/>
<circle cx="47.0" cy="156.6" r="0.35" fill="#dfeaff" opacity="0.51"/>
<circle cx="14.2" cy="311.2" r="0.85" fill="#dfeaff" opacity="0.44"/>
<circle cx="660.5" cy="683.6" r="0.35" fill="#dfeaff" opacity="0.56"/>
<circle cx="464.9" cy="724.0" r="0.35" fill="#dfeaff" opacity="0.16"/>
<circle cx="17.4" cy="538.1" r="0.5" fill="#dfeaff" opacity="0.39"/>
<circle cx="2.7" cy="94.7" r="0.35" fill="#dfeaff" opacity="0.36"/>
<circle cx="6.2" cy="341.2" r="0.5" fill="#dfeaff" opacity="0.42"/>
<circle cx="475.9" cy="692.0" r="0.45" fill="#dfeaff" opacity="0.13"/>
<circle cx="496.0" cy="681.7" r="0.6" fill="#dfeaff" opacity="0.62"/>
<circle cx="108.1" cy="765.2" r="0.5" fill="#dfeaff" opacity="0.26"/>
<circle cx="468.5" cy="787.7" r="0.7" fill="#dfeaff" opacity="0.16"/>
<circle cx="42" cy="185" r="1.2" fill="#fff" opacity="0.95"/>
<circle cx="24" cy="408" r="1.8" fill="#fff" opacity="0.95"/>
<circle cx="44" cy="432" r="0.9" fill="#fff" opacity="0.95"/>
<circle cx="35" cy="545" r="0.9" fill="#fff" opacity="0.95"/>
<circle cx="29" cy="580" r="0.8" fill="#fff" opacity="0.95"/>
<circle cx="12" cy="48" r="0.8" fill="#fff" opacity="0.95"/>
</svg>

<div id="menubar">
<svg width="1280" height="22" viewBox="0 0 1280 22" style="left:0;top:0">
<defs><linearGradient id="ag" x1="0" x2="0" y1="0" y2="1"><stop offset="0" stop-color="#1c1c1c"/><stop offset=".55" stop-color="#3c3c3c"/><stop offset="1" stop-color="#7a7a7a"/></linearGradient></defs>
<g transform="translate(20.2,-0.3) scale(0.0395)"><path d="M318.7 268.7c-.2-36.7 16.4-64.4 50-84.8-18.8-26.9-47.2-41.7-84.7-44.600-35.500-2.800-74.300 20.700-88.500 20.700-15 0-49.400-19.700-76.400-19.700C63.300 141.200 4 184.800 4 273.500q0 39.300 14.400 81.200c12.800 36.700 59 126.700 107.200 125.200 25.200-.6 43-17.900 75.800-17.900 31.800 0 48.300 17.900 76.400 17.900 48.600-.7 90.400-82.500 102.600-119.300-65.200-30.700-61.700-90-61.700-91.900zm-56.600-164.200c27.300-32.400 24.800-61.900 24-72.500-24.100 1.400-52 16.400-67.900 34.900-17.500 19.800-27.800 44.300-25.600 71.900 26.100 2 49.900-11.400 69.500-34.300z" fill="url(#ag)"/></g>
<!-- display -->
<path d="M951.3 3.5 H968.7 V17.3 H965.6 V14.6 H954.4 V17.3 H951.3 Z" fill="#f4f4f4" stroke="#222" stroke-width="1.1"/>
<rect x="953.2" y="5.3" width="13.6" height="7.2" fill="#161616"/>
<!-- phone -->
<path d="M984.2 8.6 c-1.2 1.2 -0.6 3.2 1.2 5.600 c1.800 2.300 3.900 3.900 5.600 3.500 l1.300 -1.400 -2.300 -2.200 -1.400 .9 c-1 -.5 -2.600 -2.400 -3 -3.500 l1.100 -1.200 -1.700 -2.500 z" fill="#111" stroke="#111" stroke-width=".9" stroke-linejoin="round"/>
<path d="M989.5 9.500 a3 3 0 0 1 2 2.200 M991 6.800 a5.500 5.500 0 0 1 3.600 3.800 M993 4.300 a8 8 0 0 1 4.600 5" fill="none" stroke="#888" stroke-width="1.1" stroke-dasharray="1.2 1.2"/>
<!-- wifi -->
<path d="M1020.3 17 L1009.6 7.6 Q1020.3 -1.200 1031 7.600 Z" fill="#f2f2f2" stroke="#8d8d8d" stroke-width="1"/>
<!-- speaker -->
<path d="M1040.300 9.200 H1043 L1047.700 5.300 V16.500 L1043 12.800 H1040.300 Z" fill="#111"/>
<!-- battery -->
<rect x="1071.700" y="5.300" width="17" height="10.800" rx="2" fill="#f4f4f4" stroke="#222" stroke-width="1.400"/>
<path d="M1089.500 8.600 q2.600 2.100 0 4.300 z" fill="#222" stroke="#222" stroke-width=".5"/>
<rect x="1074" y="7.500" width="6.200" height="6.400" fill="#111"/><rect x="1080.200" y="7.500" width="2.200" height="6.400" fill="#8a8a8a"/>
<!-- A -->
<rect x="1141" y="3.300" width="14.600" height="14.400" rx="2" fill="#333"/>
<text x="1148.300" y="16.200" font-family="Liberation Serif, serif" font-weight="bold" font-size="16" fill="#fff" text-anchor="middle">A</text>
<!-- search -->
<circle cx="1250.600" cy="9.300" r="4.500" fill="none" stroke="#1a1a1a" stroke-width="1.900"/>
<path d="M1253.900 12.700 L1257.900 16.600" stroke="#1a1a1a" stroke-width="2.400" stroke-linecap="round"/>
</svg>
  <div class="apptitle">_20110806_1</div>
  <div class="txt" id="bat" style="left:1097px;font-size:12px;letter-spacing:-.35px;top:1px">(67%)</div>
  <div class="txt" id="day" style="left:1170px;top:0px">土</div><div class="txt" id="clk" style="left:1189px;font-size:15px;letter-spacing:.5px;top:1px">12:09</div>
</div>

<div id="sketch">
  <div class="tbar">_20110806_1
    <span class="tl" style="left:8px;background:radial-gradient(circle at 50% 30%,#ffb0a8 0,#f03030 45%,#b00d0d 100%);border:1px solid #8d2a2a"></span>
    <span class="tl" style="left:29px;background:radial-gradient(circle at 50% 30%,#ffe9a0 0,#f5a523 50%,#c9650a 100%);border:1px solid #9a5a15"></span>
    <span class="tl" style="left:50px;background:radial-gradient(circle at 50% 30%,#fafafa 0,#d4d4d4 55%,#b4b4b4 100%);border:1px solid #999"></span>
  </div>
  <svg id="canvas" viewBox="0 0 600 600">
<circle cx="15" cy="15" r="15" fill="#801a33"/>
<circle cx="45" cy="15" r="15" fill="#8a0a35"/>
<circle cx="75" cy="15" r="15" fill="#b90536"/>
<circle cx="105" cy="15" r="15" fill="#b02831"/>
<circle cx="135" cy="15" r="15" fill="#a8412e"/>
<circle cx="165" cy="15" r="15" fill="#6b402e"/>
<circle cx="195" cy="15" r="15" fill="#a03230"/>
<circle cx="225" cy="15" r="15" fill="#b90536"/>
<circle cx="255" cy="15" r="15" fill="#b90536"/>
<circle cx="285" cy="15" r="15" fill="#6e0a35"/>
<circle cx="315" cy="15" r="15" fill="#be0536"/>
<circle cx="345" cy="15" r="15" fill="#9b0536"/>
<circle cx="375" cy="15" r="15" fill="#aa0536"/>
<circle cx="405" cy="15" r="15" fill="#870a35"/>
<circle cx="435" cy="15" r="15" fill="#b40536"/>
<circle cx="465" cy="15" r="15" fill="#b90a35"/>
<circle cx="495" cy="15" r="15" fill="#961e33"/>
<circle cx="525" cy="15" r="15" fill="#5f3730"/>
<circle cx="555" cy="15" r="15" fill="#b93c2f"/>
<circle cx="585" cy="15" r="15" fill="#be412e"/>
<circle cx="15" cy="45" r="15" fill="#950a35"/>
<circle cx="45" cy="45" r="15" fill="#7d1534"/>
<circle cx="75" cy="45" r="15" fill="#6b3530"/>
<circle cx="105" cy="45" r="15" fill="#5f452e"/>
<circle cx="135" cy="45" r="15" fill="#ab382f"/>
<circle cx="165" cy="45" r="15" fill="#8d1f33"/>
<circle cx="195" cy="45" r="15" fill="#8c0a35"/>
<circle cx="225" cy="45" r="15" fill="#730536"/>
<circle cx="255" cy="45" r="15" fill="#730a35"/>
<circle cx="285" cy="45" r="15" fill="#871e33"/>
<circle cx="315" cy="45" r="15" fill="#962332"/>
<circle cx="345" cy="45" r="15" fill="#b91e33"/>
<circle cx="375" cy="45" r="15" fill="#822d31"/>
<circle cx="405" cy="45" r="15" fill="#a02d31"/>
<circle cx="435" cy="45" r="15" fill="#b41434"/>
<circle cx="465" cy="45" r="15" fill="#8c0536"/>
<circle cx="495" cy="45" r="15" fill="#8c0536"/>
<circle cx="525" cy="45" r="15" fill="#910536"/>
<circle cx="555" cy="45" r="15" fill="#9b2332"/>
<circle cx="585" cy="45" r="15" fill="#963c2f"/>
<circle cx="15" cy="75" r="15" fill="#730a35"/>
<circle cx="45" cy="75" r="15" fill="#b42d31"/>
<circle cx="75" cy="75" r="15" fill="#69412e"/>
<circle cx="105" cy="75" r="15" fill="#963730"/>
<circle cx="135" cy="75" r="15" fill="#781434"/>
<circle cx="165" cy="75" r="15" fill="#b90536"/>
<circle cx="195" cy="75" r="15" fill="#960a35"/>
<circle cx="225" cy="75" r="15" fill="#b41933"/>
<circle cx="255" cy="75" r="15" fill="#783c2f"/>
<circle cx="285" cy="75" r="15" fill="#a0462e"/>
<circle cx="315" cy="75" r="15" fill="#9b462e"/>
<circle cx="345" cy="75" r="15" fill="#8c412e"/>
<circle cx="375" cy="75" r="15" fill="#7d412e"/>
<circle cx="405" cy="75" r="15" fill="#af462e"/>
<circle cx="435" cy="75" r="15" fill="#7d462e"/>
<circle cx="465" cy="75" r="15" fill="#873c2f"/>
<circle cx="495" cy="75" r="15" fill="#7d2332"/>
<circle cx="525" cy="75" r="15" fill="#aa0536"/>
<circle cx="555" cy="75" r="15" fill="#870536"/>
<circle cx="585" cy="75" r="15" fill="#781933"/>
<circle cx="15" cy="105" r="15" fill="#b41e33"/>
<circle cx="45" cy="105" r="15" fill="#8c462e"/>
<circle cx="75" cy="105" r="15" fill="#963c2f"/>
<circle cx="105" cy="105" r="15" fill="#781933"/>
<circle cx="135" cy="105" r="15" fill="#bc0536"/>
<circle cx="165" cy="105" r="15" fill="#af0a35"/>
<circle cx="195" cy="105" r="15" fill="#aa3230"/>
<circle cx="225" cy="105" r="15" fill="#af412e"/>
<circle cx="255" cy="105" r="15" fill="#55412e"/>
<circle cx="285" cy="105" r="15" fill="#82412e"/>
<circle cx="315" cy="105" r="15" fill="#913230"/>
<circle cx="345" cy="105" r="15" fill="#872d31"/>
<circle cx="375" cy="105" r="15" fill="#912d31"/>
<circle cx="405" cy="105" r="15" fill="#aa3230"/>
<circle cx="435" cy="105" r="15" fill="#5a3c2f"/>
<circle cx="465" cy="105" r="15" fill="#96412e"/>
<circle cx="495" cy="105" r="15" fill="#73412e"/>
<circle cx="525" cy="105" r="15" fill="#a53730"/>
<circle cx="555" cy="105" r="15" fill="#af0a35"/>
<circle cx="585" cy="105" r="15" fill="#b90a35"/>
<circle cx="15" cy="135" r="15" fill="#a5412e"/>
<circle cx="45" cy="135" r="15" fill="#a0412e"/>
<circle cx="75" cy="135" r="15" fill="#961e33"/>
<circle cx="105" cy="135" r="15" fill="#bc0536"/>
<circle cx="135" cy="135" r="15" fill="#a00a35"/>
<circle cx="165" cy="135" r="15" fill="#8c3c2f"/>
<circle cx="195" cy="135" r="15" fill="#a0462e"/>
<circle cx="225" cy="135" r="15" fill="#b93c2f"/>
<circle cx="255" cy="135" r="15" fill="#962332"/>
<circle cx="285" cy="135" r="15" fill="#820536"/>
<circle cx="315" cy="135" r="15" fill="#b90536"/>
<circle cx="345" cy="135" r="15" fill="#960536"/>
<circle cx="375" cy="135" r="15" fill="#640536"/>
<circle cx="405" cy="135" r="15" fill="#960a35"/>
<circle cx="435" cy="135" r="15" fill="#aa0a35"/>
<circle cx="465" cy="135" r="15" fill="#692d31"/>
<circle cx="495" cy="135" r="15" fill="#af3c2f"/>
<circle cx="525" cy="135" r="15" fill="#87412e"/>
<circle cx="555" cy="135" r="15" fill="#aa3730"/>
<circle cx="585" cy="135" r="15" fill="#960a35"/>
<circle cx="15" cy="165" r="15" fill="#96412e"/>
<circle cx="45" cy="165" r="15" fill="#b93230"/>
<circle cx="75" cy="165" r="15" fill="#9b0536"/>
<circle cx="105" cy="165" r="15" fill="#870a35"/>
<circle cx="135" cy="165" r="15" fill="#b92d31"/>
<circle cx="165" cy="165" r="15" fill="#64462e"/>
<circle cx="195" cy="165" r="15" fill="#a0412e"/>
<circle cx="225" cy="165" r="15" fill="#b40a35"/>
<circle cx="255" cy="165" r="15" fill="#af0536"/>
<circle cx="285" cy="165" r="15" fill="#a50536"/>
<circle cx="315" cy="165" r="15" fill="#b90a35"/>
<circle cx="345" cy="165" r="15" fill="#732332"/>
<circle cx="375" cy="165" r="15" fill="#7d1e33"/>
<circle cx="405" cy="165" r="15" fill="#731434"/>
<circle cx="435" cy="165" r="15" fill="#8c0536"/>
<circle cx="465" cy="165" r="15" fill="#910536"/>
<circle cx="495" cy="165" r="15" fill="#6e1933"/>
<circle cx="525" cy="165" r="15" fill="#783c2f"/>
<circle cx="555" cy="165" r="15" fill="#5f462e"/>
<circle cx="585" cy="165" r="15" fill="#733230"/>
<circle cx="15" cy="195" r="15" fill="#963c2f"/>
<circle cx="45" cy="195" r="15" fill="#af1434"/>
<circle cx="75" cy="195" r="15" fill="#af0a35"/>
<circle cx="105" cy="195" r="15" fill="#8c2332"/>
<circle cx="135" cy="195" r="15" fill="#aa3c2f"/>
<circle cx="165" cy="195" r="15" fill="#a03c2f"/>
<circle cx="195" cy="195" r="15" fill="#821434"/>
<circle cx="225" cy="195" r="15" fill="#730536"/>
<circle cx="255" cy="195" r="15" fill="#be0536"/>
<circle cx="285" cy="195" r="15" fill="#b43730"/>
<circle cx="315" cy="195" r="15" fill="#6e412e"/>
<circle cx="345" cy="195" r="15" fill="#af462e"/>
<circle cx="375" cy="195" r="15" fill="#55462e"/>
<circle cx="405" cy="195" r="15" fill="#6e412e"/>
<circle cx="435" cy="195" r="15" fill="#963730"/>
<circle cx="465" cy="195" r="15" fill="#a00a35"/>
<circle cx="495" cy="195" r="15" fill="#7d0536"/>
<circle cx="525" cy="195" r="15" fill="#b90536"/>
<circle cx="555" cy="195" r="15" fill="#963c2f"/>
<circle cx="585" cy="195" r="15" fill="#8c412e"/>
<circle cx="15" cy="225" r="15" fill="#873730"/>
<circle cx="45" cy="225" r="15" fill="#730a35"/>
<circle cx="75" cy="225" r="15" fill="#be0036"/>
<circle cx="105" cy="225" r="15" fill="#643c2f"/>
<circle cx="135" cy="225" r="15" fill="#b43c2f"/>
<circle cx="165" cy="225" r="15" fill="#732831"/>
<circle cx="195" cy="225" r="15" fill="#7d0536"/>
<circle cx="225" cy="225" r="15" fill="#9b0a35"/>
<circle cx="255" cy="225" r="15" fill="#b43230"/>
<circle cx="285" cy="225" r="15" fill="#af412e"/>
<circle cx="315" cy="225" r="15" fill="#a5412e"/>
<circle cx="345" cy="225" r="15" fill="#b93230"/>
<circle cx="375" cy="225" r="15" fill="#b92d31"/>
<circle cx="405" cy="225" r="15" fill="#5f412e"/>
<circle cx="435" cy="225" r="15" fill="#af462e"/>
<circle cx="465" cy="225" r="15" fill="#a03c2f"/>
<circle cx="495" cy="225" r="15" fill="#9b0536"/>
<circle cx="525" cy="225" r="15" fill="#8c0536"/>
<circle cx="555" cy="225" r="15" fill="#b41e33"/>
<circle cx="585" cy="225" r="15" fill="#af412e"/>
<circle cx="15" cy="255" r="15" fill="#693230"/>
<circle cx="45" cy="255" r="15" fill="#870a35"/>
<circle cx="75" cy="255" r="15" fill="#af0536"/>
<circle cx="105" cy="255" r="15" fill="#b9412e"/>
<circle cx="135" cy="255" r="15" fill="#87412e"/>
<circle cx="165" cy="255" r="15" fill="#870a35"/>
<circle cx="195" cy="255" r="15" fill="#aa0a35"/>
<circle cx="225" cy="255" r="15" fill="#8c3c2f"/>
<circle cx="255" cy="255" r="15" fill="#96462e"/>
<circle cx="285" cy="255" r="15" fill="#963730"/>
<circle cx="315" cy="255" r="15" fill="#a00a35"/>
<circle cx="345" cy="255" r="15" fill="#b40a35"/>
<circle cx="375" cy="255" r="15" fill="#aa0a35"/>
<circle cx="405" cy="255" r="15" fill="#af0f35"/>
<circle cx="435" cy="255" r="15" fill="#8c3c2f"/>
<circle cx="465" cy="255" r="15" fill="#87462e"/>
<circle cx="495" cy="255" r="15" fill="#b93230"/>
<circle cx="525" cy="255" r="15" fill="#aa0f35"/>
<circle cx="555" cy="255" r="15" fill="#8c1434"/>
<circle cx="585" cy="255" r="15" fill="#b43c2f"/>
<circle cx="15" cy="285" r="15" fill="#822831"/>
<circle cx="45" cy="285" r="15" fill="#9b0536"/>
<circle cx="75" cy="285" r="15" fill="#912332"/>
<circle cx="105" cy="285" r="15" fill="#73462e"/>
<circle cx="135" cy="285" r="15" fill="#9b3730"/>
<circle cx="165" cy="285" r="15" fill="#6e0536"/>
<circle cx="195" cy="285" r="15" fill="#c30536"/>
<circle cx="225" cy="285" r="15" fill="#96412e"/>
<circle cx="255" cy="285" r="15" fill="#91462e"/>
<circle cx="285" cy="285" r="15" fill="#911434"/>
<circle cx="315" cy="285" r="15" fill="#960f35"/>
<circle cx="345" cy="285" r="15" fill="#af0a35"/>
<circle cx="375" cy="285" r="15" fill="#b90536"/>
<circle cx="405" cy="285" r="15" fill="#780536"/>
<circle cx="435" cy="285" r="15" fill="#911e33"/>
<circle cx="465" cy="285" r="15" fill="#9b412e"/>
<circle cx="495" cy="285" r="15" fill="#a5412e"/>
<circle cx="525" cy="285" r="15" fill="#b40a35"/>
<circle cx="555" cy="285" r="15" fill="#a00a35"/>
<circle cx="585" cy="285" r="15" fill="#b43730"/>
<circle cx="15" cy="315" r="15" fill="#aa1933"/>
<circle cx="45" cy="315" r="15" fill="#be0536"/>
<circle cx="75" cy="315" r="15" fill="#642d31"/>
<circle cx="105" cy="315" r="15" fill="#64462e"/>
<circle cx="135" cy="315" r="15" fill="#963230"/>
<circle cx="165" cy="315" r="15" fill="#b90536"/>
<circle cx="195" cy="315" r="15" fill="#962332"/>
<circle cx="225" cy="315" r="15" fill="#af462e"/>
<circle cx="255" cy="315" r="15" fill="#a03730"/>
<circle cx="285" cy="315" r="15" fill="#6e0536"/>
<circle cx="315" cy="315" r="15" fill="#731434"/>
<circle cx="345" cy="315" r="15" fill="#ffffff"/>
<circle cx="375" cy="315" r="15" fill="#823730"/>
<circle cx="405" cy="315" r="15" fill="#aa0a35"/>
<circle cx="435" cy="315" r="15" fill="#780536"/>
<circle cx="465" cy="315" r="15" fill="#823c2f"/>
<circle cx="495" cy="315" r="15" fill="#aa412e"/>
<circle cx="525" cy="315" r="15" fill="#be0536"/>
<circle cx="555" cy="315" r="15" fill="#a50536"/>
<circle cx="585" cy="315" r="15" fill="#6e2d31"/>
<circle cx="15" cy="345" r="15" fill="#822332"/>
<circle cx="45" cy="345" r="15" fill="#8c0a35"/>
<circle cx="75" cy="345" r="15" fill="#b41e33"/>
<circle cx="105" cy="345" r="15" fill="#9b462e"/>
<circle cx="135" cy="345" r="15" fill="#963230"/>
<circle cx="165" cy="345" r="15" fill="#730536"/>
<circle cx="195" cy="345" r="15" fill="#8c2831"/>
<circle cx="225" cy="345" r="15" fill="#73462e"/>
<circle cx="255" cy="345" r="15" fill="#963730"/>
<circle cx="285" cy="345" r="15" fill="#b40a35"/>
<circle cx="315" cy="345" r="15" fill="#731434"/>
<circle cx="345" cy="345" r="15" fill="#823230"/>
<circle cx="375" cy="345" r="15" fill="#af3230"/>
<circle cx="405" cy="345" r="15" fill="#6e0a35"/>
<circle cx="435" cy="345" r="15" fill="#be0536"/>
<circle cx="465" cy="345" r="15" fill="#643c2f"/>
<circle cx="495" cy="345" r="15" fill="#b4412e"/>
<circle cx="525" cy="345" r="15" fill="#911434"/>
<circle cx="555" cy="345" r="15" fill="#870536"/>
<circle cx="585" cy="345" r="15" fill="#af3230"/>
<circle cx="15" cy="375" r="15" fill="#6e2d31"/>
<circle cx="45" cy="375" r="15" fill="#be0536"/>
<circle cx="75" cy="375" r="15" fill="#af1933"/>
<circle cx="105" cy="375" r="15" fill="#b9412e"/>
<circle cx="135" cy="375" r="15" fill="#a03730"/>
<circle cx="165" cy="375" r="15" fill="#a50536"/>
<circle cx="195" cy="375" r="15" fill="#731434"/>
<circle cx="225" cy="375" r="15" fill="#a0412e"/>
<circle cx="255" cy="375" r="15" fill="#82412e"/>
<circle cx="285" cy="375" r="15" fill="#be0536"/>
<circle cx="315" cy="375" r="15" fill="#960a35"/>
<circle cx="345" cy="375" r="15" fill="#b40536"/>
<circle cx="375" cy="375" r="15" fill="#870536"/>
<circle cx="405" cy="375" r="15" fill="#b40a35"/>
<circle cx="435" cy="375" r="15" fill="#7d1e33"/>
<circle cx="465" cy="375" r="15" fill="#8c3c2f"/>
<circle cx="495" cy="375" r="15" fill="#aa3c2f"/>
<circle cx="525" cy="375" r="15" fill="#a50a35"/>
<circle cx="555" cy="375" r="15" fill="#730536"/>
<circle cx="585" cy="375" r="15" fill="#963230"/>
<circle cx="15" cy="405" r="15" fill="#aa3730"/>
<circle cx="45" cy="405" r="15" fill="#7d0a35"/>
<circle cx="75" cy="405" r="15" fill="#aa0536"/>
<circle cx="105" cy="405" r="15" fill="#9b412e"/>
<circle cx="135" cy="405" r="15" fill="#a03c2f"/>
<circle cx="165" cy="405" r="15" fill="#960a35"/>
<circle cx="195" cy="405" r="15" fill="#aa0a35"/>
<circle cx="225" cy="405" r="15" fill="#823230"/>
<circle cx="255" cy="405" r="15" fill="#64462e"/>
<circle cx="285" cy="405" r="15" fill="#9b3730"/>
<circle cx="315" cy="405" r="15" fill="#b40a35"/>
<circle cx="345" cy="405" r="15" fill="#910a35"/>
<circle cx="375" cy="405" r="15" fill="#be0536"/>
<circle cx="405" cy="405" r="15" fill="#aa1933"/>
<circle cx="435" cy="405" r="15" fill="#a03c2f"/>
<circle cx="465" cy="405" r="15" fill="#91412e"/>
<circle cx="495" cy="405" r="15" fill="#6e3230"/>
<circle cx="525" cy="405" r="15" fill="#a50a35"/>
<circle cx="555" cy="405" r="15" fill="#6e1434"/>
<circle cx="585" cy="405" r="15" fill="#8c3c2f"/>
<circle cx="15" cy="435" r="15" fill="#7d3c2f"/>
<circle cx="45" cy="435" r="15" fill="#8c0a35"/>
<circle cx="75" cy="435" r="15" fill="#820536"/>
<circle cx="105" cy="435" r="15" fill="#873c2f"/>
<circle cx="135" cy="435" r="15" fill="#8c462e"/>
<circle cx="165" cy="435" r="15" fill="#783230"/>
<circle cx="195" cy="435" r="15" fill="#aa0a35"/>
<circle cx="225" cy="435" r="15" fill="#be0536"/>
<circle cx="255" cy="435" r="15" fill="#7d3c2f"/>
<circle cx="285" cy="435" r="15" fill="#78462e"/>
<circle cx="315" cy="435" r="15" fill="#aa412e"/>
<circle cx="345" cy="435" r="15" fill="#963730"/>
<circle cx="375" cy="435" r="15" fill="#5f3730"/>
<circle cx="405" cy="435" r="15" fill="#b9412e"/>
<circle cx="435" cy="435" r="15" fill="#64462e"/>
<circle cx="465" cy="435" r="15" fill="#a53230"/>
<circle cx="495" cy="435" r="15" fill="#a50536"/>
<circle cx="525" cy="435" r="15" fill="#a50a35"/>
<circle cx="555" cy="435" r="15" fill="#9b2831"/>
<circle cx="585" cy="435" r="15" fill="#a0412e"/>
<circle cx="15" cy="465" r="15" fill="#783c2f"/>
<circle cx="45" cy="465" r="15" fill="#b90a35"/>
<circle cx="75" cy="465" r="15" fill="#960536"/>
<circle cx="105" cy="465" r="15" fill="#781e33"/>
<circle cx="135" cy="465" r="15" fill="#a0412e"/>
<circle cx="165" cy="465" r="15" fill="#733c2f"/>
<circle cx="195" cy="465" r="15" fill="#af0a35"/>
<circle cx="225" cy="465" r="15" fill="#af0536"/>
<circle cx="255" cy="465" r="15" fill="#b90536"/>
<circle cx="285" cy="465" r="15" fill="#642d31"/>
<circle cx="315" cy="465" r="15" fill="#b43c2f"/>
<circle cx="345" cy="465" r="15" fill="#73412e"/>
<circle cx="375" cy="465" r="15" fill="#78412e"/>
<circle cx="405" cy="465" r="15" fill="#5a412e"/>
<circle cx="435" cy="465" r="15" fill="#9b3730"/>
<circle cx="465" cy="465" r="15" fill="#820a35"/>
<circle cx="495" cy="465" r="15" fill="#a50536"/>
<circle cx="525" cy="465" r="15" fill="#961434"/>
<circle cx="555" cy="465" r="15" fill="#9b412e"/>
<circle cx="585" cy="465" r="15" fill="#78412e"/>
<circle cx="15" cy="495" r="15" fill="#96412e"/>
<circle cx="45" cy="495" r="15" fill="#693730"/>
<circle cx="75" cy="495" r="15" fill="#6e0536"/>
<circle cx="105" cy="495" r="15" fill="#b90536"/>
<circle cx="135" cy="495" r="15" fill="#963230"/>
<circle cx="165" cy="495" r="15" fill="#7d462e"/>
<circle cx="195" cy="495" r="15" fill="#873c2f"/>
<circle cx="225" cy="495" r="15" fill="#a50536"/>
<circle cx="255" cy="495" r="15" fill="#a50536"/>
<circle cx="285" cy="495" r="15" fill="#a00536"/>
<circle cx="315" cy="495" r="15" fill="#780f35"/>
<circle cx="345" cy="495" r="15" fill="#691933"/>
<circle cx="375" cy="495" r="15" fill="#be0536"/>
<circle cx="405" cy="495" r="15" fill="#7d0a35"/>
<circle cx="435" cy="495" r="15" fill="#aa0536"/>
<circle cx="465" cy="495" r="15" fill="#7d0536"/>
<circle cx="495" cy="495" r="15" fill="#911e33"/>
<circle cx="525" cy="495" r="15" fill="#643730"/>
<circle cx="555" cy="495" r="15" fill="#96412e"/>
<circle cx="585" cy="495" r="15" fill="#a02d31"/>
<circle cx="15" cy="525" r="15" fill="#b43730"/>
<circle cx="45" cy="525" r="15" fill="#9b412e"/>
<circle cx="75" cy="525" r="15" fill="#9b1e33"/>
<circle cx="105" cy="525" r="15" fill="#8c0536"/>
<circle cx="135" cy="525" r="15" fill="#870536"/>
<circle cx="165" cy="525" r="15" fill="#b43730"/>
<circle cx="195" cy="525" r="15" fill="#b9462e"/>
<circle cx="225" cy="525" r="15" fill="#5a3c2f"/>
<circle cx="255" cy="525" r="15" fill="#7d2831"/>
<circle cx="285" cy="525" r="15" fill="#b90536"/>
<circle cx="315" cy="525" r="15" fill="#af0536"/>
<circle cx="345" cy="525" r="15" fill="#a50536"/>
<circle cx="375" cy="525" r="15" fill="#870536"/>
<circle cx="405" cy="525" r="15" fill="#c30536"/>
<circle cx="435" cy="525" r="15" fill="#9b0f35"/>
<circle cx="465" cy="525" r="15" fill="#732d31"/>
<circle cx="495" cy="525" r="15" fill="#8c412e"/>
<circle cx="525" cy="525" r="15" fill="#b9412e"/>
<circle cx="555" cy="525" r="15" fill="#b42d31"/>
<circle cx="585" cy="525" r="15" fill="#9b0536"/>
<circle cx="15" cy="555" r="15" fill="#872332"/>
<circle cx="45" cy="555" r="15" fill="#64412e"/>
<circle cx="75" cy="555" r="15" fill="#873c2f"/>
<circle cx="105" cy="555" r="15" fill="#692332"/>
<circle cx="135" cy="555" r="15" fill="#b90536"/>
<circle cx="165" cy="555" r="15" fill="#910536"/>
<circle cx="195" cy="555" r="15" fill="#693230"/>
<circle cx="225" cy="555" r="15" fill="#8c3c2f"/>
<circle cx="255" cy="555" r="15" fill="#96412e"/>
<circle cx="285" cy="555" r="15" fill="#693c2f"/>
<circle cx="315" cy="555" r="15" fill="#7d3230"/>
<circle cx="345" cy="555" r="15" fill="#963230"/>
<circle cx="375" cy="555" r="15" fill="#b92d31"/>
<circle cx="405" cy="555" r="15" fill="#963730"/>
<circle cx="435" cy="555" r="15" fill="#913c2f"/>
<circle cx="465" cy="555" r="15" fill="#a5412e"/>
<circle cx="495" cy="555" r="15" fill="#87412e"/>
<circle cx="525" cy="555" r="15" fill="#692d31"/>
<circle cx="555" cy="555" r="15" fill="#960536"/>
<circle cx="585" cy="555" r="15" fill="#870536"/>
<circle cx="15" cy="585" r="15" fill="#b40a35"/>
<circle cx="45" cy="585" r="15" fill="#af2d31"/>
<circle cx="75" cy="585" r="15" fill="#af3c2f"/>
<circle cx="105" cy="585" r="15" fill="#9b3730"/>
<circle cx="135" cy="585" r="15" fill="#be0536"/>
<circle cx="165" cy="585" r="15" fill="#a50536"/>
<circle cx="195" cy="585" r="15" fill="#af0536"/>
<circle cx="225" cy="585" r="15" fill="#7d1933"/>
<circle cx="255" cy="585" r="15" fill="#872d31"/>
<circle cx="285" cy="585" r="15" fill="#a03c2f"/>
<circle cx="315" cy="585" r="15" fill="#a5412e"/>
<circle cx="345" cy="585" r="15" fill="#82412e"/>
<circle cx="375" cy="585" r="15" fill="#693c2f"/>
<circle cx="405" cy="585" r="15" fill="#8c412e"/>
<circle cx="435" cy="585" r="15" fill="#a5412e"/>
<circle cx="465" cy="585" r="15" fill="#a53230"/>
<circle cx="495" cy="585" r="15" fill="#961e33"/>
<circle cx="525" cy="585" r="15" fill="#780536"/>
<circle cx="555" cy="585" r="15" fill="#b90a35"/>
<circle cx="585" cy="585" r="15" fill="#be0a35"/>
  </svg>
</div>

<div id="pde">
  <div class="tbar">_20110806_1 | Processing 1.2.1
    <span class="tl" style="left:8px;background:radial-gradient(circle at 50% 50%,#9a9a9a 0,#a8a8a8 30%,#e0e0e0 40%,#d0d0d0 100%);border:1px solid #b2b2b2"></span>
    <span class="tl" style="left:29px;background:radial-gradient(circle at 50% 40%,#f4f4f4 0,#dcdcdc 60%,#c8c8c8 100%);border:1px solid #b2b2b2"></span>
    <span class="tl" style="left:50px;background:radial-gradient(circle at 50% 40%,#f4f4f4 0,#dcdcdc 60%,#c8c8c8 100%);border:1px solid #b2b2b2"></span>
  </div>
  <div id="toolbar"><svg width="575" height="32" viewBox="0 0 575 32" style="position:absolute;left:0;top:0">
<circle cx="16.5" cy="16.4" r="12" fill="#fdd30b"/>
<path d="M13.4 12.4 L21.6 16.5 L13.4 20.8 Z" fill="#5b6774"/>
<circle cx="43.4" cy="16.4" r="11.6" fill="#a8b2bd"/>
<rect x="39.9" y="13.1" width="7" height="7" fill="#5b6774"/>
<rect x="66" y="6" width="21" height="21" fill="#a5b0bb"/>
<rect x="93" y="6" width="21" height="21" fill="#a5b0bb"/>
<rect x="120" y="6" width="21" height="21" fill="#a5b0bb"/>
<rect x="147" y="6" width="21" height="21" fill="#a5b0bb"/>
<path d="M71 10 H78 L82 14 V23 H71 Z" fill="#5b6774"/>
<path d="M78 10 L82 14 H78 Z" fill="#8c98a4"/>
<rect x="72.6" y="12.2" width="1.1" height="1.1" fill="#c3ccd5"/><rect x="75.0" y="12.2" width="1.1" height="1.1" fill="#c3ccd5"/><rect x="77.39999999999999" y="12.2" width="1.1" height="1.1" fill="#c3ccd5"/><rect x="72.6" y="15.1" width="1.1" height="1.1" fill="#c3ccd5"/><rect x="75.0" y="15.1" width="1.1" height="1.1" fill="#c3ccd5"/><rect x="77.39999999999999" y="15.1" width="1.1" height="1.1" fill="#c3ccd5"/><rect x="79.8" y="15.1" width="1.1" height="1.1" fill="#c3ccd5"/><rect x="72.6" y="18.0" width="1.1" height="1.1" fill="#c3ccd5"/><rect x="75.0" y="18.0" width="1.1" height="1.1" fill="#c3ccd5"/><rect x="77.39999999999999" y="18.0" width="1.1" height="1.1" fill="#c3ccd5"/><rect x="79.8" y="18.0" width="1.1" height="1.1" fill="#c3ccd5"/><rect x="72.6" y="20.9" width="1.1" height="1.1" fill="#c3ccd5"/><rect x="75.0" y="20.9" width="1.1" height="1.1" fill="#c3ccd5"/><rect x="77.39999999999999" y="20.9" width="1.1" height="1.1" fill="#c3ccd5"/><rect x="79.8" y="20.9" width="1.1" height="1.1" fill="#c3ccd5"/>
<path d="M103.5 9.8 L109 15.2 H105.4 V19 H101.6 V15.2 H98 Z" fill="#5b6774"/>
<rect x="97" y="22" width="1" height="1" fill="#5b6774"/><rect x="99" y="22" width="1" height="1" fill="#5b6774"/><rect x="101" y="22" width="1" height="1" fill="#5b6774"/><rect x="103" y="22" width="1" height="1" fill="#5b6774"/><rect x="105" y="22" width="1" height="1" fill="#5b6774"/><rect x="107" y="22" width="1" height="1" fill="#5b6774"/><rect x="109" y="22" width="1" height="1" fill="#5b6774"/>
<path d="M130.5 19 L136 13.6 H132.4 V10 H128.6 V13.6 H125 Z" fill="#5b6774"/>
<rect x="125" y="22" width="1" height="1" fill="#5b6774"/><rect x="127" y="22" width="1" height="1" fill="#5b6774"/><rect x="129" y="22" width="1" height="1" fill="#5b6774"/><rect x="131" y="22" width="1" height="1" fill="#5b6774"/><rect x="133" y="22" width="1" height="1" fill="#5b6774"/><rect x="135" y="22" width="1" height="1" fill="#5b6774"/>
<path d="M158.8 16.5 L153.4 11 V14.6 H150 V18.4 H153.4 V22 Z" fill="#5b6774"/>
<rect x="162" y="10" width="1" height="1" fill="#5b6774"/><rect x="162" y="12" width="1" height="1" fill="#5b6774"/><rect x="162" y="14" width="1" height="1" fill="#5b6774"/><rect x="162" y="16" width="1" height="1" fill="#5b6774"/><rect x="162" y="18" width="1" height="1" fill="#5b6774"/><rect x="162" y="20" width="1" height="1" fill="#5b6774"/><rect x="162" y="22" width="1" height="1" fill="#5b6774"/><rect x="164" y="10" width="1" height="1" fill="#5b6774"/><rect x="164" y="12" width="1" height="1" fill="#5b6774"/><rect x="164" y="14" width="1" height="1" fill="#5b6774"/><rect x="164" y="16" width="1" height="1" fill="#5b6774"/><rect x="164" y="18" width="1" height="1" fill="#5b6774"/><rect x="164" y="20" width="1" height="1" fill="#5b6774"/><rect x="164" y="22" width="1" height="1" fill="#5b6774"/>
</svg></div>
  <div id="tabs"><div id="tab">_20110806_1 §</div><svg width="18" height="18" viewBox="0 0 18 18" style="position:absolute;left:542px;top:8px"><rect width="17" height="17" fill="#a7b1bb"/><path d="M13 8.5 L8.6 4 V6.9 H4.5 V10.1 H8.6 V13 Z" fill="#4d5965"/></svg></div>
  <div id="editor"><div id="code">
<div class="ln" style="padding-left:0px"><span class="k">void</span> <span class="f">setup</span>() {</div>
<div class="ln" style="padding-left:48px"><span class="k">int</span> i, j;</div>
<div class="ln" style="padding-left:48px"><span class="f">size</span>(600, 600);</div>
<div class="ln" style="padding-left:48px"><span class="f">colorMode</span>(<span class="c">RGB</span>);</div>
<div class="ln" style="padding-left:48px"><span class="f">background</span>(20,1,55);</div>
<div class="ln" style="padding-left:48px"><span class="f">noStroke</span>();</div>
<div class="ln" style="padding-left:48px"><span class="f">smooth</span>();</div>
<div class="ln" style="padding-left:48px"><span class="k">for</span>(i=0; i &lt; total_mesh; i++){</div>
<div class="ln" style="padding-left:96px"><span class="k">for</span>(j=0; j &lt; total_mesh; j++){ buff[i][j] = 50; }</div>
<div class="ln" style="padding-left:48px">}</div>
<div class="ln" style="padding-left:0px">}</div>
<div class="ln" style="padding-left:0px">&nbsp;</div>
<div class="ln" style="padding-left:0px"><span class="k">void</span> <span class="f">draw</span>() {</div>
<div class="ln" style="padding-left:48px"><span class="k">int</span> i, j, box_size;</div>
<div class="ln" style="padding-left:48px"><span class="k">float</span> xx, yy, distance, wave, sin_color;</div>
<div class="ln" style="padding-left:48px">box_size = 600 / total_mesh;</div>
<div class="ln" style="padding-left:48px">global_time = global_time + 0.1; <span class="m">// wave speed</span></div>
<div class="ln" style="padding-left:48px"><span class="k">if</span> (global_time &gt; 3.1415926535*2){ global_time = 0; }</div>
<div class="ln" style="padding-left:48px"><span class="k">for</span>(i=0; i &lt; total_mesh; i++){</div>
<div class="ln" style="padding-left:96px"><span class="k">for</span>(j=0; j &lt; total_mesh; j++){</div>
<div class="ln" style="padding-left:144px"><span class="k">if</span>( <span class="f">random</span>(20) &lt; 1 ){ buff[i][j] = <span class="f">random</span>(8,100)+50; }</div>
<div class="ln" style="padding-left:144px">xx = (j+0.5) * box_size;</div>
<div class="ln" style="padding-left:144px">yy = (i+0.5) * box_size;</div>
<div class="ln" style="padding-left:144px">distance = <span class="f">sqrt</span>( <span class="f">sq</span>(xx-<span class="c">mouseX</span>) + <span class="f">sq</span>(yy-<span class="c">mouseY</span>) );</div>
<div class="ln" style="padding-left:144px"><span class="k">if</span> ( distance &lt; box_size/1.5 ){</div>
<div class="ln" style="padding-left:192px"><span class="f">fill</span>(255,255,255);</div>
<div class="ln" style="padding-left:144px">}</div>
<div class="ln" style="padding-left:144px"><span class="k">else</span>{</div>
<div class="ln" style="padding-left:192px">sin_color = <span class="f">sin</span>( distance/20.0 - global_time) + 1;</div>
<div class="ln" style="padding-left:192px"><span class="f">fill</span>( buff[i][j], 20*sin_color+10, 40 );</div>
<div class="ln" style="padding-left:144px">}</div>
<div class="ln" style="padding-left:144px"><span class="f">ellipse</span>(xx, yy, box_size, box_size);</div>
<div class="ln" style="padding-left:96px">}</div>
<div class="ln" style="padding-left:48px">}</div>
<div class="ln" style="padding-left:0px">}</div>
</div></div>
  <div id="vscroll"><svg width="15" height="534" viewBox="0 0 15 534" style="position:absolute;left:0;top:0">
<defs><linearGradient id="th" x1="0" x2="1" y1="0" y2="0"><stop offset="0" stop-color="#dcdcdc"/><stop offset=".3" stop-color="#fafafa"/><stop offset=".55" stop-color="#ffffff"/><stop offset="1" stop-color="#d8d8d8"/></linearGradient>
<linearGradient id="tr" x1="0" x2="1" y1="0" y2="0"><stop offset="0" stop-color="#cfcfcf"/><stop offset=".35" stop-color="#eeeeee"/><stop offset="1" stop-color="#f6f6f6"/></linearGradient></defs>
<rect width="15" height="534" fill="#f2f2f2"/>
<rect x="0" y="0" width="1" height="534" fill="#d4d4d4"/>
<path d="M4.2 11 L7.7 5.2 L11.2 11 Z" fill="#4a4a4a"/>
<rect x="1" y="16" width="13.5" height="504" rx="6.5" fill="url(#tr)"/>
<rect x="1.2" y="56" width="13" height="463" rx="6.5" fill="url(#th)" stroke="#8a8a8a" stroke-width="1"/>
<path d="M4.2 522.5 L7.7 528.3 L11.2 522.5 Z" fill="#4a4a4a"/>
</svg></div>
  <div id="hscroll"></div>
  <div style="position:absolute;left:560px;top:621px;width:15px;height:15px;background:#e9e9e9"></div><div id="divider"><svg width="575" height="10" viewBox="0 0 575 10" style="position:absolute;left:0;top:0"><path d="M284 3.8 q2.5 -3 5 0" fill="none" stroke="#333" stroke-width="1.3"/><path d="M561 7 L564 3 L567 7 Z M568 3 L574 3 L571 7 Z" fill="#b5b5b5"/></svg></div>
  <div id="msg"></div>
  <div id="console"></div>
  <div id="cscroll"><svg width="15" height="58" viewBox="0 0 15 58" style="position:absolute;left:0;top:0">
<rect width="15" height="58" fill="#f2f2f2"/>
<path d="M4.2 10.5 L7.7 4.7 L11.2 10.5 Z" fill="#4a4a4a"/>
<rect x="1.2" y="15" width="13" height="28" rx="6.5" fill="url(#th)" stroke="#8a8a8a" stroke-width="1"/>
<path d="M4.2 47.5 L7.7 53.3 L11.2 47.5 Z" fill="#4a4a4a"/>
</svg></div>
  <div id="status">34<svg width="14" height="14" viewBox="0 0 14 14" style="position:absolute;right:1px;bottom:1px"><path d="M2 13 L13 2 M6 13 L13 6 M10 13 L13 10" stroke="#a9b6c4" stroke-width="1"/></svg></div>
</div>
</body>
</html>
